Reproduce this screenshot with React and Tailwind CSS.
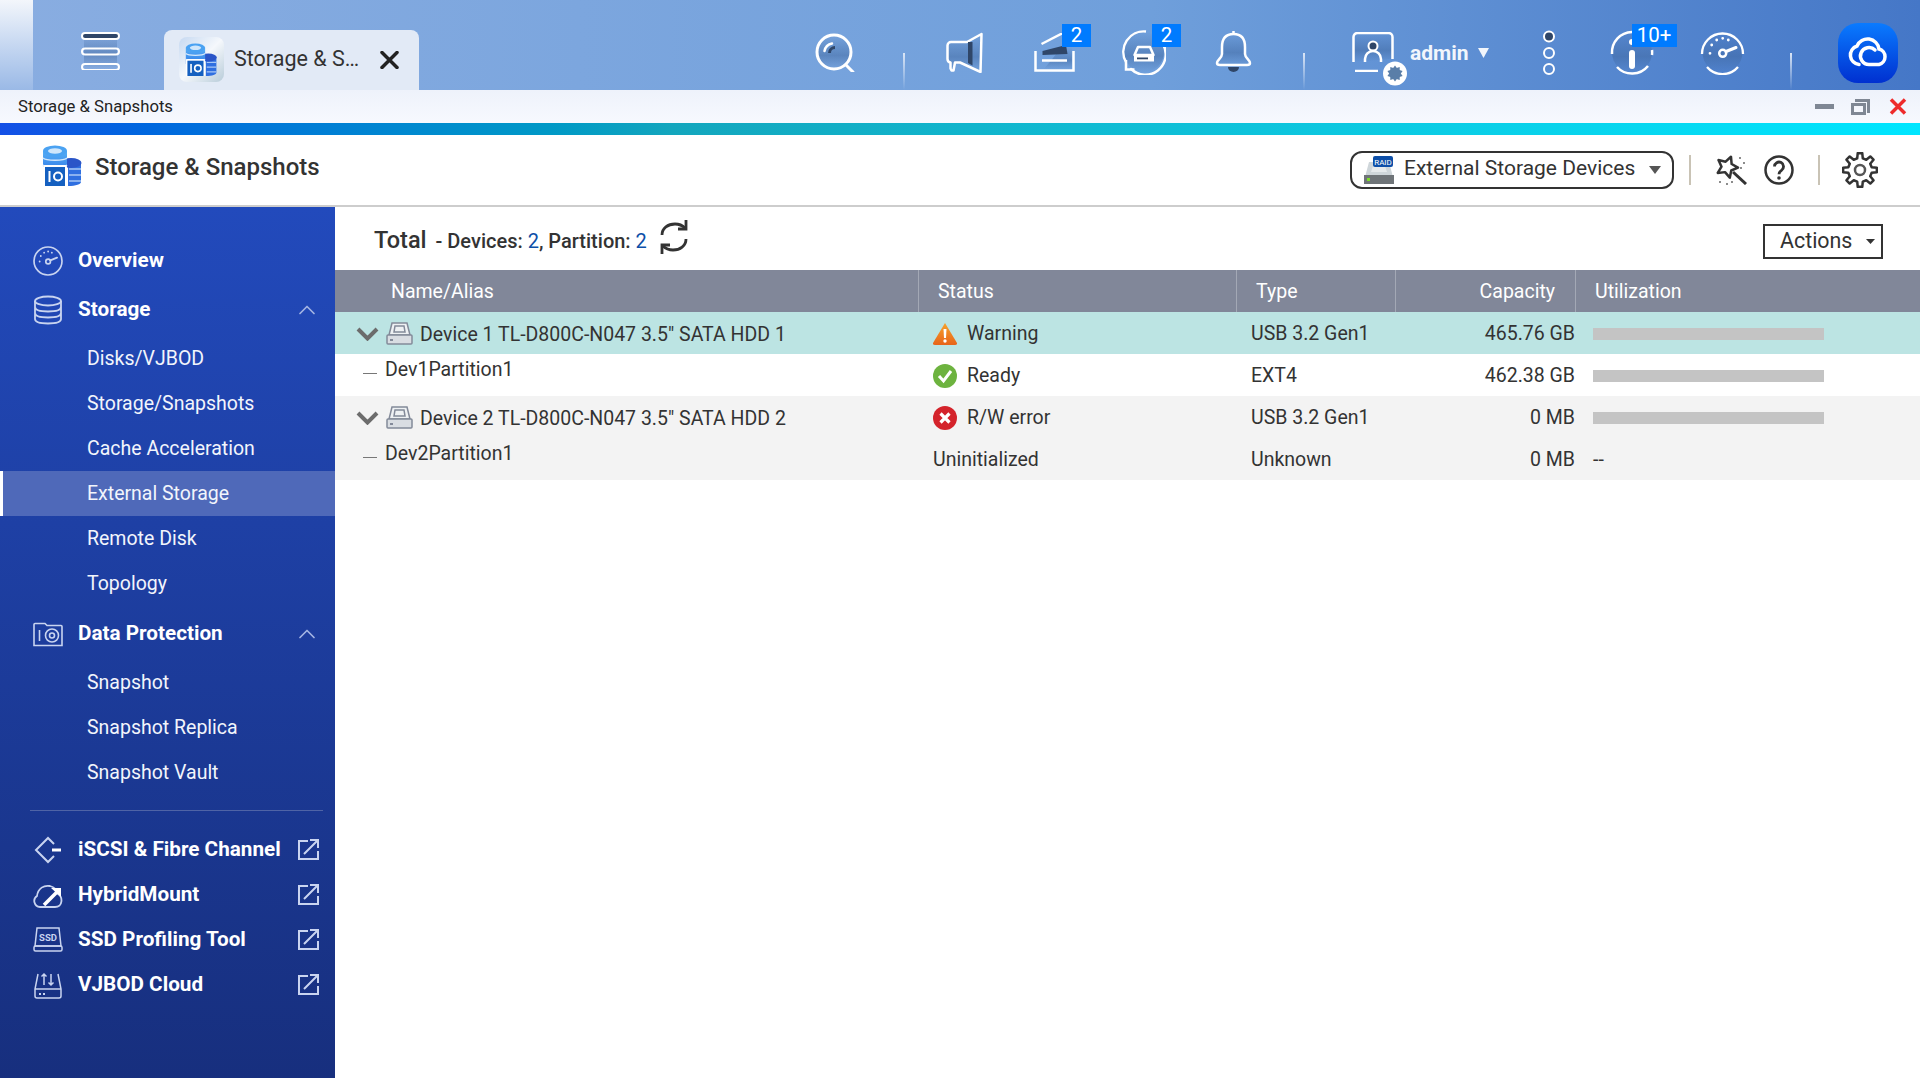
import { ChevronUp } from "lucide-react";

const ink = "#2f4668";

// gear and star outlines are easier to compute than to write by hand
function gearPath(cx, cy, outer, inner, teeth) {
  const pts = [];
  const step = (Math.PI * 2) / teeth;
  for (let i = 0; i < teeth; i++) {
    const a = i * step - Math.PI / 2;
    [[-0.3, inner], [-0.17, outer], [0.17, outer], [0.3, inner]].forEach(([o, r]) => {
      const t = a + o * step;
      pts.push(`${(cx + r * Math.cos(t)).toFixed(2)} ${(cy + r * Math.sin(t)).toFixed(2)}`);
    });
  }
  return `M${pts.join("L")}Z`;
}

function starPath(cx, cy, outer, inner, rot) {
  const pts = [];
  for (let i = 0; i < 10; i++) {
    const r = i % 2 ? inner : outer;
    const t = rot + (i * Math.PI) / 5;
    pts.push(`${(cx + r * Math.cos(t)).toFixed(2)} ${(cy + r * Math.sin(t)).toFixed(2)}`);
  }
  return `M${pts.join("L")}Z`;
}

function Shade() {
  return (
    <svg width="0" height="0" className="block h-0 w-0">
      <defs>
        <linearGradient id="shade" x1="0" y1="0" x2="0" y2="1">
          <stop offset="0" stopColor="#3f679f" stopOpacity="0" />
          <stop offset="0.6" stopColor="#3f679f" stopOpacity="0.5" />
          <stop offset="1" stopColor="#3f679f" stopOpacity="0" />
        </linearGradient>
        <linearGradient id="db" x1="0" y1="0" x2="0" y2="1">
          <stop offset="0" stopColor="#58b0f5" />
          <stop offset="1" stopColor="#2f7be8" />
        </linearGradient>
        <linearGradient id="cloudapp" x1="0" y1="0" x2="0" y2="1">
          <stop offset="0" stopColor="#0a7bff" />
          <stop offset="1" stopColor="#0030d0" />
        </linearGradient>
        <linearGradient id="warn" x1="0" y1="0" x2="0" y2="1">
          <stop offset="0" stopColor="#f6a32c" />
          <stop offset="1" stopColor="#e8641a" />
        </linearGradient>
      </defs>
    </svg>
  );
}

function AppGlyph({ className }) {
  return (
    <svg viewBox="2 0 39 41" className={className} fill="none">
      <path d="M27 15c7 0 13 2 13 5v17c0 2-5 4-13 4z" fill="#2f6fe0" />
      <path d="M28 24h12M28 30h12M28 36h12" stroke="#a8c8f5" strokeWidth="1.5" />
      <ellipse cx="30" cy="18" rx="10.5" ry="5" fill="#2a55c8" />
      <path d="M2 6v20h24V6z" fill="url(#db)" />
      <path d="M2 13c3 3 21 3 24 0M2 20c3 3 21 3 24 0" stroke="#d5e8fb" strokeWidth="1.5" />
      <ellipse cx="14" cy="6" rx="12" ry="5.5" fill="#4aa2f2" />
      <ellipse cx="14" cy="6" rx="7" ry="2.8" fill="#cfe6fb" />
      <rect x="2" y="20" width="24" height="21" rx="2" fill="#fff" />
      <rect x="4" y="22" width="20" height="19" fill="#1560c0" />
      <rect x="7.5" y="26" width="2" height="11" fill="#fff" />
      <circle cx="17" cy="31.5" r="4" stroke="#fff" strokeWidth="2" />
    </svg>
  );
}

function Hamburger() {
  return (
    <svg width="39" height="39" viewBox="0 0 39 39" fill="none" className="mt-[31px] ml-[48px]">
      <rect x="3" y="1" width="33" height="37" fill="url(#shade)" />
      <rect x="1" y="2" width="37" height="6" rx="3" fill={ink} stroke="#fff" strokeWidth="2" />
      <rect x="1" y="17.5" width="37" height="6" rx="3" stroke="#fff" strokeWidth="2" />
      <rect x="1" y="33" width="37" height="6" rx="3" stroke="#fff" strokeWidth="2" />
    </svg>
  );
}

function SearchIcon() {
  return (
    <svg width="40" height="39" viewBox="0 0 40 39" fill="none" className="mt-[33px] ml-[396px]">
      <circle cx="19" cy="19" r="17" fill="url(#shade)" stroke="#fff" strokeWidth="3" />
      <path d="M31 32l7 7" stroke="#fff" strokeWidth="3" strokeLinecap="round" />
      <path d="M13 20a7 7 0 0 1 7-7v3a4 4 0 0 0-4 4z" fill={ink} />
      <path d="M9.500 18a9.500 9.500 0 0 1 7.500-7.500" stroke="#fff" strokeWidth="2.500" strokeLinecap="round" />
    </svg>
  );
}

function Divider({ className }) {
  return <div className={`mt-[53px] h-[37px] w-[2px] bg-gradient-to-b from-[#dbe6f6] to-[#dbe6f600] ${className}`} />;
}

function MegaphoneIcon() {
  return (
    <svg width="37" height="41" viewBox="0 0 37 41" fill="none" className="mt-[32px] ml-[41px]">
      <path d="M35.500 2L21 10H5a3.500 3.500 0 0 0-3.500 3.500V27a3.500 3.500 0 0 0 3 3.500v6l1 2h2l1.500-8h5l20.500 9.500z" fill="url(#shade)" stroke="#fff" strokeWidth="2.500" strokeLinejoin="round" />
      <path d="M22 10h4.500v23.500L22 31z" fill={ink} />
    </svg>
  );
}

function Badge({ children, className }) {
  return (
    <span className={`absolute top-[24px] flex h-[23px] items-center justify-center bg-[#007bff] text-[20.5px] leading-none text-white ${className}`}>
      {children}
    </span>
  );
}

function StackIcon() {
  return (
    <svg width="41" height="39" viewBox="0 0 41 39" fill="none" className="mt-[33px] ml-[51px]">
      <path d="M28 14h10v22H10z" fill="url(#shade)" />
      <path d="M7.500 11L29 0" stroke="#fff" strokeWidth="2.500" />
      <path d="M8.500 18L32 12l1.500 9-25 1z" fill={ink} />
      <path d="M8 27.500h25" stroke="#fff" strokeWidth="2.500" />
      <path d="M1.500 18v19.500h38V18" stroke="#fff" strokeWidth="2.500" />
    </svg>
  );
}

function SyncIcon() {
  return (
    <svg width="44" height="45" viewBox="0 0 44 45" fill="none" className="mt-[30px] ml-[47px]">
      <circle cx="22" cy="22" r="20" fill="url(#shade)" />
      <path d="M4 32A20.500 20.500 0 0 1 24 1.500" stroke="#fff" strokeWidth="2.500" />
      <path d="M41 14A20.500 20.500 0 0 1 9 39" stroke="#fff" strokeWidth="2.500" strokeLinecap="round" />
      <path d="M4 30v9.500h8.500" stroke="#fff" strokeWidth="2.500" fill="none" />
      <path d="M12.500 25l3.500-8h12l3.500 8z" stroke="#fff" strokeWidth="2.500" strokeLinejoin="round" />
      <rect x="12" y="25" width="20" height="6.500" fill="#fff" />
      <rect x="15" y="27.500" width="11" height="1.800" fill={ink} />
    </svg>
  );
}

function BellIcon() {
  return (
    <svg width="37" height="43" viewBox="0 0 37 43" fill="none" className="mt-[30px] ml-[49px]">
      <path d="M18.500 4C10 4 7 10 7 17v7c0 4-5 6-5 9 0 1.500 1 2 3 2h27c2 0 3-.5 3-2 0-3-5-5-5-9v-7c0-7-3-13-11.500-13z" fill="url(#shade)" stroke="#fff" strokeWidth="2.500" />
      <path d="M18.500 4V1" stroke="#fff" strokeWidth="2.500" />
      <path d="M13 37a5.500 5 0 0 0 11 0z" fill={ink} />
    </svg>
  );
}

function UserIcon() {
  return (
    <div className="relative mt-[32px] ml-[47px] h-[54px] w-[55px]">
      <svg width="42" height="40" viewBox="0 0 42 40" fill="none" className="block">
        <path d="M1.500 30V5a4 4 0 0 1 4-4h31a4 4 0 0 1 4 4v22" fill="url(#shade)" stroke="#fff" strokeWidth="2.500" />
        <circle cx="21" cy="14" r="4.500" fill={ink} stroke="#fff" strokeWidth="2" />
        <path d="M13 30v-3a8 8 0 0 1 16 0v3" stroke="#fff" strokeWidth="2.500" />
        <path d="M3 39h23" stroke="#fff" strokeWidth="2.500" />
      </svg>
      <svg width="24" height="25" viewBox="0 0 24 25" className="absolute top-[29px] left-[31px]">
        <circle cx="12" cy="12.500" r="12" fill="#fff" />
        <path d={starPath(12, 12.5, 8, 5, -Math.PI / 2)} fill="#5a7ea8" />
        <path d={starPath(12, 12.5, 8, 5, Math.PI / 10)} fill="#5a7ea8" />
      </svg>
    </div>
  );
}

function DotsIcon() {
  return (
    <svg width="14" height="46" viewBox="0 0 14 46" fill="none" className="mt-[30px] ml-[53px]">
      <circle cx="7" cy="6.500" r="5" fill={ink} stroke="#fff" strokeWidth="2" />
      <circle cx="7" cy="23" r="5" stroke="#fff" strokeWidth="2" />
      <circle cx="7" cy="39" r="5" stroke="#fff" strokeWidth="2" />
    </svg>
  );
}

function InfoIcon() {
  return (
    <svg width="44" height="45" viewBox="0 0 44 45" fill="none" className="mt-[30px] ml-[54px]">
      <circle cx="22" cy="22.500" r="20" fill="url(#shade)" />
      <path d="M2 24A20.500 20.500 0 0 1 22 2M42 20A20.500 20.500 0 0 1 42 25" stroke="#fff" strokeWidth="2.500" />
      <path d="M7 37a20.500 20.500 0 0 0 31 -1" stroke="#fff" strokeWidth="2.500" />
      <circle cx="22" cy="12" r="3" fill="#fff" />
      <rect x="19" y="20" width="6" height="19" rx="3" fill="#fff" />
    </svg>
  );
}

function GaugeIcon({ className, size = 45, stroke = "#fff", closed }) {
  return (
    <svg width={size} height={size} viewBox="0 0 45 45" fill="none" className={className}>
      {closed ? (
        <circle cx="22.500" cy="22.500" r="21" stroke={stroke} strokeWidth="2.500" />
      ) : (
        <>
          <circle cx="22.500" cy="22.500" r="20" fill="url(#shade)" />
          <path d="M2 24A20.500 20.500 0 1 1 43 24" stroke={stroke} strokeWidth="2.300" />
          <path d="M7 37a20.500 20.500 0 0 0 31 0" stroke={stroke} strokeWidth="2.300" />
        </>
      )}
      <circle cx="22.700" cy="23.300" r="3.500" stroke={stroke} strokeWidth="2.500" />
      <path d="M26 21.500l10-4" stroke={stroke} strokeWidth="3" strokeLinecap="round" />
      <path d="M10 23.300v0M11.700 15v0M16.700 10v0M22.700 8.300v0M28.300 10v0" stroke={stroke} strokeWidth="2.800" strokeLinecap="round" />
    </svg>
  );
}

function CloudApp() {
  return (
    <svg width="60" height="60" viewBox="0 0 60 60" fill="none" className="mt-[23px] ml-[46px]">
      <rect width="60" height="60" rx="20" fill="url(#cloudapp)" />
      <path d="M21 41.500A9.500 9.500 0 0 1 19 23A11.500 11.500 0 0 1 41 26A8 8 0 0 1 41 41.500H31A8.500 8.500 0 1 1 37 27" stroke="#fff" strokeWidth="3.500" strokeLinecap="round" />
    </svg>
  );
}

function TopBar() {
  return (
    <div className="flex h-[90px] bg-gradient-to-r from-[#89ade1] via-[#6f9fdb] via-60% to-[#4577c7]">
      <div className="h-full w-[33px] bg-gradient-to-b from-[#f3f6fb] to-[#9ab9e6]" />
      <Hamburger />
      <div className="mt-[30px] ml-[44px] flex h-[60px] w-[255px] items-center rounded-t-[8px] bg-[#e2eaf6] pb-[2px] pl-[15px]">
        <div className="h-[45px] w-[45px] rounded-[8px] bg-[linear-gradient(135deg,#c6d9f1,#f5f8fc_50%,#b8ccd9)] p-[6px]">
          <AppGlyph className="h-[33px] w-[33px]" />
        </div>
        <span className="ml-[10px] w-[126px] text-[21.5px] whitespace-nowrap text-[#333]">Storage &amp; S…</span>
        <svg width="19" height="18" viewBox="0 0 19 18" className="mt-[2px] ml-[20px]">
          <path d="M2 1.500l15 15M17 1.500l-15 15" stroke="#222" strokeWidth="3.500" strokeLinecap="round" />
        </svg>
      </div>
      <SearchIcon />
      <Divider className="ml-[48px]" />
      <MegaphoneIcon />
      <div className="relative">
        <StackIcon />
        <Badge className="left-[79px] w-[29px]">2</Badge>
      </div>
      <div className="relative">
        <SyncIcon />
        <Badge className="left-[77px] w-[29px]">2</Badge>
      </div>
      <BellIcon />
      <Divider className="ml-[51px]" />
      <UserIcon />
      <span className="mt-[39px] ml-[3px] text-[21px] leading-[28px] font-bold text-[#f2f6fc]">admin</span>
      <svg width="11" height="10" viewBox="0 0 11 10" className="mt-[48px] ml-[9px]">
        <path d="M0 0h11L5.500 10z" fill="#f2f6fc" />
      </svg>
      <DotsIcon />
      <div className="relative">
        <InfoIcon />
        <Badge className="left-[76px] w-[45px]">10+</Badge>
      </div>
      <GaugeIcon className="mt-[30px] ml-[46px]" />
      <Divider className="ml-[45px]" />
      <CloudApp />
    </div>
  );
}

function TitleBar() {
  return (
    <div className="flex h-[33px] items-center bg-gradient-to-b from-[#eef2fb] to-[#f7f9fe] pl-[18px] text-[16.7px] text-[#222]">
      <span className="pt-px">Storage &amp; Snapshots</span>
      <div className="ml-auto flex items-center pr-[13px]">
        <div className="h-[5px] w-[19px] bg-[#7f8794]" />
        <svg width="19" height="16" viewBox="0 0 19 16" className="ml-[17px]" fill="none">
          <path d="M4 1.500h13.500V14" stroke="#7f8794" strokeWidth="3" />
          <rect x="1.500" y="5.500" width="12" height="9" stroke="#7f8794" strokeWidth="3" />
        </svg>
        <svg width="18" height="17" viewBox="0 0 18 17" className="ml-[19px]">
          <path d="M2 1.500l14 14M16 1.500l-14 14" stroke="#ee2b2b" strokeWidth="3.500" />
        </svg>
      </div>
    </div>
  );
}

function RaidIcon() {
  return (
    <svg width="30" height="28" viewBox="0 0 30 28" fill="none">
      <path d="M5 6h20l4 15H1z" fill="#cfd6da" />
      <path d="M9 10h12l2 6H7z" fill="#e6eaec" />
      <rect y="19" width="30" height="9" fill="#6f7478" />
      <rect x="3" y="22" width="3" height="3" fill="#7ddc2b" />
      <rect x="9" y="0" width="20" height="11" rx="2" fill="#0d4fa8" />
      <text x="19" y="8.500" textAnchor="middle" fontSize="8" fill="#fff" fontFamily="Roboto">RAID</text>
    </svg>
  );
}

function AppHeader() {
  return (
    <div className="flex h-[72px] items-center border-b-[2px] border-[#cdcdcd] pl-[42px]">
      <AppGlyph className="mb-[10px] h-[41px] w-[41px]" />
      <span className="mb-[7px] ml-[12px] text-[24px] font-medium text-[#333]">Storage &amp; Snapshots</span>
      <div className="ml-auto flex items-center pr-[42px]">
        <div className="flex h-[38px] w-[324px] items-center rounded-[12px] border-[2px] border-[#333] pl-[12px]">
          <RaidIcon />
          <span className="mb-[3px] ml-[10px] text-[21px] text-[#333]">External Storage Devices</span>
          <svg width="12" height="8" viewBox="0 0 12 8" className="mr-[11px] ml-auto">
            <path d="M0 0h12L6 8z" fill="#555" />
          </svg>
        </div>
        <div className="ml-[15px] h-[30px] w-[2px] bg-[#c9c3b5]" />
        <svg width="32" height="30" viewBox="0 0 32 30" fill="none" className="ml-[25px]">
          <path d={starPath(11, 12, 11, 5.5, -1.2)} stroke="#333" strokeWidth="2.500" strokeLinejoin="round" />
          <path d="M17 17l13 12" stroke="#333" strokeWidth="3" />
          <path d="M24 3v0M28 8v0M25 13v0M4 27v0M11 29v0M16 27v0" stroke="#666" strokeWidth="2" strokeLinecap="round" />
        </svg>
        <svg width="30" height="30" viewBox="0 0 30 30" fill="none" className="ml-[16px]">
          <circle cx="15" cy="15" r="13.500" stroke="#333" strokeWidth="2.500" />
          <path d="M10.500 11.500a4.500 4.500 0 1 1 7 3.800c-1.500 1-2.500 2-2.500 4" stroke="#333" strokeWidth="2.800" />
          <circle cx="15" cy="23" r="1.800" fill="#333" />
        </svg>
        <div className="ml-[24px] h-[30px] w-[2px] bg-[#c9c3b5]" />
        <svg width="36" height="36" viewBox="0 0 36 36" fill="none" className="ml-[22px]">
          <path d={gearPath(18, 18, 17, 12, 8)} stroke="#333" strokeWidth="2.500" strokeLinejoin="round" />
          <circle cx="18" cy="18" r="5" stroke="#555" strokeWidth="2.500" />
        </svg>
      </div>
    </div>
  );
}

function NavIcon({ name }) {
  const s = "#c9d4f0";
  if (name === "overview") {
    return <GaugeIcon size={30} stroke={s} closed />;
  }
  if (name === "storage") {
    return (
      <svg width="30" height="30" viewBox="0 0 30 30" fill="none" stroke={s} strokeWidth="1.800">
        <ellipse cx="15" cy="6" rx="13" ry="4.500" />
        <path d="M2 6v18c0 3 6 4.500 13 4.500s13-1.500 13-4.500V6M2 12c0 3 6 4.500 13 4.500s13-1.500 13-4.500M2 18c0 3 6 4.500 13 4.500s13-1.500 13-4.500" />
      </svg>
    );
  }
  if (name === "protection") {
    return (
      <svg width="30" height="30" viewBox="0 0 30 30" fill="none" stroke={s} strokeWidth="1.600">
        <path d="M1 5.500a1 1 0 0 1 1-1h10l2 2h14a1 1 0 0 1 1 1V26.500H1z" />
        <path d="M6.500 11v11" />
        <circle cx="19" cy="16.500" r="6.500" />
        <circle cx="19" cy="16.500" r="2.500" />
      </svg>
    );
  }
  if (name === "iscsi") {
    return (
      <svg width="30" height="30" viewBox="0 0 30 30" fill="none" stroke={s} strokeWidth="2">
        <path d="M21 9l-6-6L3 15l12 12 6-6" />
        <path d="M19 15h9" strokeWidth="3" stroke="#fff" />
      </svg>
    );
  }
  if (name === "hybrid") {
    return (
      <svg width="30" height="30" viewBox="0 0 30 30" fill="none" stroke={s} strokeWidth="1.800">
        <path d="M7 27a6 6 0 0 1-3-11c1-8 7-11 13-10 4 1 7 4 8 8 5 3 5 13-3 13z" />
        <path d="M11 25l13-13" strokeWidth="3.500" stroke="#fff" />
        <path d="M18 8h10v9z" fill="#fff" stroke="none" />
      </svg>
    );
  }
  if (name === "ssd") {
    return (
      <svg width="30" height="30" viewBox="0 0 30 30" fill="none" stroke={s} strokeWidth="1.500">
        <path d="M4 3h22l2 18H2z" />
        <rect x="1" y="21" width="28" height="5" rx="1.500" />
        <text x="15" y="15.500" textAnchor="middle" fontSize="9.500" fontWeight="700" fill={s} stroke="none" fontFamily="Roboto">SSD</text>
      </svg>
    );
  }
  return (
    <svg width="30" height="30" viewBox="0 0 30 30" fill="none" stroke={s} strokeWidth="1.500">
      <path d="M5 4L2 19v7a2 2 0 0 0 2 2h22a2 2 0 0 0 2-2v-7L25 4M2 19h26" />
      <path d="M11 4v11M8.500 6.500L11 4l2.500 2.500M18 15V4M15.500 12.500L18 15l2.500-2.500" />
      <path d="M6 24h2M10 24h2" strokeWidth="2" />
    </svg>
  );
}

function NavMain({ icon, label, open }) {
  return (
    <div className="flex h-[49px] items-center pl-[33px]">
      <NavIcon name={icon} />
      <span className="ml-[15px] text-[20.7px] font-bold text-white">{label}</span>
      {open && <ChevronUp className="mr-[14px] ml-auto h-[28px] w-[28px] text-[#a3b4e3]" strokeWidth={1.5} />}
    </div>
  );
}

function NavSub({ label, active }) {
  return (
    <div className={`flex h-[45px] items-center text-[19.5px] text-[#f2f5fc] ${active ? "border-l-[3px] border-white bg-[#4f69b9] pl-[84px]" : "pl-[87px]"}`}>
      {label}
    </div>
  );
}

function NavExt({ icon, label }) {
  return (
    <div className="flex h-[45px] items-center pl-[33px]">
      <NavIcon name={icon} />
      <span className="ml-[15px] text-[20.7px] font-bold text-white">{label}</span>
      <svg width="21" height="21" viewBox="0 0 21 21" fill="none" stroke="#c9d4f0" strokeWidth="2" className="mr-[16px] ml-auto">
        <path d="M10 2H1v18h19v-8" />
        <path d="M6 15L20 1M12 1h8v8" />
      </svg>
    </div>
  );
}

function Sidebar() {
  return (
    <div className="flex h-[871px] w-[335px] shrink-0 flex-col bg-gradient-to-b from-[#224abc] to-[#172f7e] pt-[29px]">
      <NavMain icon="overview" label="Overview" />
      <NavMain icon="storage" label="Storage" open />
      <div className="pt-[2px] pb-[3px]">
        <NavSub label="Disks/VJBOD" />
        <NavSub label="Storage/Snapshots" />
        <NavSub label="Cache Acceleration" />
        <NavSub label="External Storage" active />
        <NavSub label="Remote Disk" />
        <NavSub label="Topology" />
      </div>
      <NavMain icon="protection" label="Data Protection" open />
      <div className="py-[2px]">
        <NavSub label="Snapshot" />
        <NavSub label="Snapshot Replica" />
        <NavSub label="Snapshot Vault" />
      </div>
      <div className="mt-[13px] mr-[12px] mb-[16px] ml-[30px] h-px bg-[#4f64a6]" />
      <NavExt icon="iscsi" label="iSCSI & Fibre Channel" />
      <NavExt icon="hybrid" label="HybridMount" />
      <NavExt icon="ssd" label="SSD Profiling Tool" />
      <NavExt icon="vjbod" label="VJBOD Cloud" />
    </div>
  );
}

function Chevron() {
  return (
    <svg width="23" height="14" viewBox="0 0 23 14" fill="none">
      <path d="M2 2l9.500 9.500L21 2" stroke="#6c6c6c" strokeWidth="4" />
    </svg>
  );
}

function HddIcon() {
  return (
    <svg width="27" height="23" viewBox="0 0 27 23" fill="none" stroke="#838a99" strokeWidth="1.500">
      <path d="M6 1h15l3 12H3z" fill="#eef1f3" />
      <path d="M9 4h9l1 6H8z" />
      <rect x="1" y="13" width="25" height="9" rx="1" fill="#d9dde2" />
      <path d="M4 18h3" strokeWidth="2" />
    </svg>
  );
}

function StatusIcon({ type }) {
  if (type === "warning") {
    return (
      <svg width="24" height="22" viewBox="0 0 24 22">
        <path d="M12 0L24 20q.5 2-2 2H2q-2.500 0-2-2z" fill="url(#warn)" />
        <path d="M10.500 6h3l-.5 9h-2z" fill="#fff" />
        <circle cx="12" cy="18" r="1.700" fill="#fff" />
      </svg>
    );
  }
  if (type === "ok") {
    return (
      <svg width="24" height="24" viewBox="0 0 24 24">
        <circle cx="12" cy="12" r="12" fill="#6db33f" />
        <path d="M6 12l4.500 5L18 7" stroke="#fff" strokeWidth="3" fill="none" />
      </svg>
    );
  }
  return (
    <svg width="24" height="24" viewBox="0 0 24 24">
      <circle cx="12" cy="12" r="12" fill="#d4232b" />
      <path d="M7.500 7.500l9 9M16.500 7.500l-9 9" stroke="#fff" strokeWidth="3.200" />
    </svg>
  );
}

const headCell = "flex h-full items-center border-r border-[#a3a8b5] pt-px";

function TableHead() {
  return (
    <div className="flex h-[42px] bg-[#818799] text-[19.5px] text-white">
      <div className={`${headCell} w-[584px] pl-[56px]`}>Name/Alias</div>
      <div className={`${headCell} w-[318px] pl-[19px]`}>Status</div>
      <div className={`${headCell} w-[159px] pl-[19px]`}>Type</div>
      <div className={`${headCell} w-[180px] justify-end pr-[20px]`}>Capacity</div>
      <div className="flex h-full items-center pt-px pl-[19px]">Utilization</div>
    </div>
  );
}

function Row({ bg, name, device, status, icon, type, capacity, bar }) {
  return (
    <div className={`flex h-[42px] items-center pt-px text-[19.5px] text-[#333] ${bg}`}>
      <div className="flex h-full w-[583px] items-center">
        {device ? (
          <>
            <span className="ml-[21px]"><Chevron /></span>
            <span className="ml-[7px]"><HddIcon /></span>
            <span className="ml-[7px] pt-[2px]">{name}</span>
          </>
        ) : (
          <div className="flex items-center pb-[12px]">
            <div className="mt-[8px] ml-[28px] h-px w-[14px] bg-[#777]" />
            <span className="ml-[8px]">{name}</span>
          </div>
        )}
      </div>
      <div className="flex w-[318px] items-center pl-[15px]">
        {icon && <StatusIcon type={icon} />}
        <span className={icon ? "ml-[10px]" : ""}>{status}</span>
      </div>
      <div className="w-[159px] pl-[15px]">{type}</div>
      <div className="w-[180px] text-right">{capacity}</div>
      <div className="pl-[18px]">
        {bar ? <div className="h-[12px] w-[231px] bg-[#c4c4c4]" /> : "--"}
      </div>
    </div>
  );
}

export default function App() {
  return (
    <div className="h-[1078px] w-[1920px] overflow-hidden bg-white [font-family:Roboto,sans-serif]">
      <Shade />
      <TopBar />
      <TitleBar />
      <div className="h-[12px] bg-gradient-to-r from-[#1450e6] via-[#13a6bd] via-35% to-[#00e6ff]" />
      <AppHeader />
      <div className="flex">
        <Sidebar />
        <div className="flex-1">
          <div className="flex h-[63px] items-center pt-[5px] pr-[37px] pl-[39px]">
            <span className="text-[23.5px] font-medium text-[#333]">Total</span>
            <span className="ml-[9px] text-[20px] font-medium text-[#333]">- Devices: <span className="font-normal text-[#0d4fa8]">2</span>, Partition: <span className="font-normal text-[#0d4fa8]">2</span></span>
            <svg width="30" height="36" viewBox="0 0 30 36" fill="none" stroke="#333" strokeWidth="2.800" className="mb-[9px] ml-[12px]">
              <path d="M3 16C3 9 9 5 16 5c4 0 7 1 10 4" />
              <path d="M27 1v9h-8" />
              <path d="M27 20c0 7-6 11-13 11-4 0-7-1-10-4" />
              <path d="M3 35v-9h8" />
            </svg>
            <div className="ml-auto flex h-[35px] w-[120px] items-center border-[2px] border-[#333] pt-px pl-[15px] text-[21.4px] text-[#333]">
              Actions
              <svg width="9" height="5" viewBox="0 0 9 5" className="mr-[6px] ml-auto">
                <path d="M0 0h9L4.500 5z" fill="#333" />
              </svg>
            </div>
          </div>
          <TableHead />
          <Row bg="bg-[#bce4e3]" device name={'Device 1 TL-D800C-N047 3.5" SATA HDD 1'} icon="warning" status="Warning" type="USB 3.2 Gen1" capacity="465.76 GB" bar />
          <Row bg="bg-white" name="Dev1Partition1" icon="ok" status="Ready" type="EXT4" capacity="462.38 GB" bar />
          <Row bg="bg-[#f3f3f3]" device name={'Device 2 TL-D800C-N047 3.5" SATA HDD 2'} icon="error" status="R/W error" type="USB 3.2 Gen1" capacity="0 MB" bar />
          <Row bg="bg-[#f3f3f3]" name="Dev2Partition1" status="Uninitialized" type="Unknown" capacity="0 MB" />
        </div>
      </div>
    </div>
  );
}
